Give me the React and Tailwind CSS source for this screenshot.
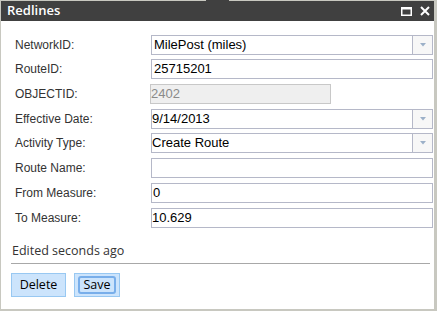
import React from "react";

const lab = "text-[12px] text-[#333] pl-[14px] w-[150px] shrink-0";
const box = "h-[20px] border border-[#b5b8c8] bg-white flex items-center text-[13px] text-black";

function Arrow() {
  return (
    <div className="w-[20px] h-full border-l border-[#b5b8c8] bg-[#f7f7f7] flex items-center justify-center">
      <svg width="6" height="4" viewBox="0 0 6 4"><path d="M0 0H6L3 3.5Z" fill="#9cb0c8" /></svg>
    </div>
  );
}

function Row({ label, children, mt }) {
  return (
    <div className={`flex items-center h-[20px] ${mt}`}>
      <div className={lab}>{label}</div>
      {children}
    </div>
  );
}

export default function App() {
  return (
    <div className="w-[437px] h-[311px] bg-[#c8c8c0] pt-[1px] pl-[1px] relative" style={{ fontFamily: '"Liberation Sans", Arial, sans-serif' }}>
      <div className="absolute top-0 left-[206px] w-[23px] h-[1px] bg-[#404040]" />
      <div className="w-[433px] h-[308px] bg-white flex flex-col">
        <div className="h-[20px] bg-[#404040] flex items-center justify-between pl-[6px] pr-[4px]">
          <span className="text-white text-[13px] font-semibold" style={{ fontFamily: '"Open Sans", sans-serif' }}>Redlines</span>
          <div className="flex items-center gap-[8px]">
            <svg width="11" height="9" viewBox="0 0 11 9"><rect x="0.75" y="0.75" width="9.5" height="7.5" fill="none" stroke="white" strokeWidth="1.5" /><rect x="0" y="0" width="11" height="2.5" fill="white" /></svg>
            <svg width="10" height="10" viewBox="0 0 10 10"><path d="M1 1L9 9M9 1L1 9" stroke="white" strokeWidth="2" /></svg>
          </div>
        </div>
        <div className="flex flex-col mt-[14px]">
          <Row label="NetworkID:">
            <div className={`${box} w-[282px] justify-between`}>
              <span className="pl-[2px]">MilePost (miles)</span>
              <Arrow />
            </div>
          </Row>
          <Row label="RouteID:" mt="mt-[4px]">
            <div className={`${box} w-[282px] pl-[2px]`}>25715201</div>
          </Row>
          <Row label="OBJECTID:" mt="mt-[5px]">
            <div className={`${box} w-[181px] !bg-[#efefef] !border-[#c8c8c8] !text-[#8a8a8a] -ml-[1px]`}>2402</div>
          </Row>
          <Row label="Effective Date:" mt="mt-[5px]">
            <div className={`${box} w-[282px] justify-between`}>
              <span>9/14/2013</span>
              <Arrow />
            </div>
          </Row>
          <Row label="Activity Type:" mt="mt-[4px]">
            <div className={`${box} w-[282px] justify-between`}>
              <span>Create Route</span>
              <Arrow />
            </div>
          </Row>
          <Row label="Route Name:" mt="mt-[5px]">
            <div className={`${box} w-[282px]`}></div>
          </Row>
          <Row label="From Measure:" mt="mt-[5px]">
            <div className={`${box} w-[282px] pl-[1px]`}>0</div>
          </Row>
          <Row label="To Measure:" mt="mt-[5px]">
            <div className={`${box} w-[282px]`}>10.629</div>
          </Row>
        </div>
        <div className="mt-[15px] ml-[11px] text-[12.5px] text-[#333] leading-[16px]" style={{ fontFamily: '"Open Sans", sans-serif' }}>Edited seconds ago</div>
        <div className="mt-[4px] ml-[10px] w-[419px] h-[1px] bg-[#a8a8a8]" />
        <div className="flex mt-[9px] ml-[10px] gap-[8px]" style={{ fontFamily: '"Open Sans", sans-serif' }}>
          <div className="w-[55px] h-[24px] bg-[#cce4fc] border border-[#98c8f2] flex items-center justify-center text-[12.5px] text-black">Delete</div>
          <div className="w-[46px] h-[24px] bg-[#cce4fc] border border-[#98c8f2] flex items-center justify-center">
            <div className="w-[38px] h-[18px] border-2 border-[#78aeea] rounded-[3px] flex items-center justify-center text-[12.5px] text-black">Save</div>
          </div>
        </div>
      </div>
    </div>
  );
}
